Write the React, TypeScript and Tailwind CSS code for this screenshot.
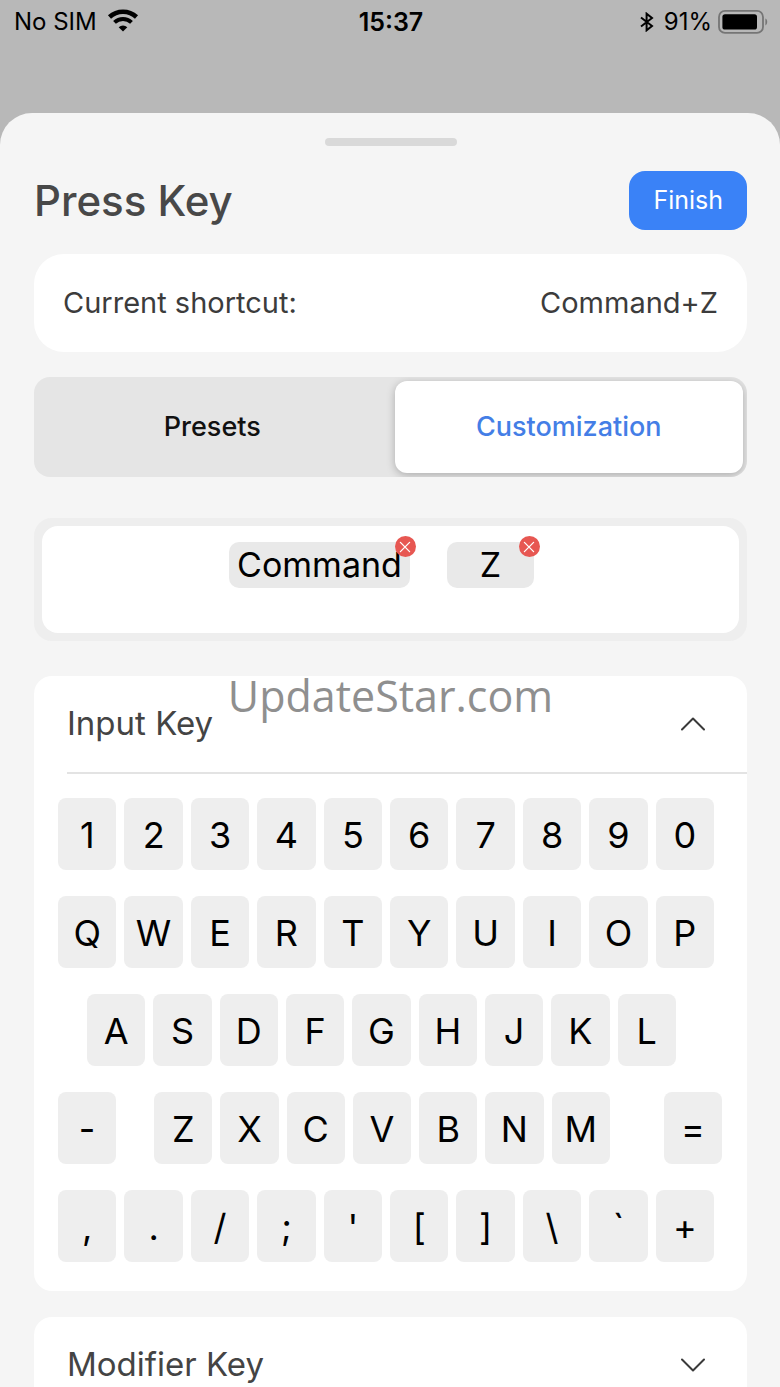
import React, { useState } from 'react';

const FONT = "font-['Inter','Liberation_Sans',sans-serif]";

// `gap` is extra space before a key, for the staggered rows
interface KeyDef {
  label: string;
  gap?: string;
}

const toKeys = (chars: string): KeyDef[] => chars.split('').map((label) => ({ label }));

const KEY_ROWS: { className: string; keys: KeyDef[] }[] = [
  { className: 'pr-2', keys: toKeys('1234567890') },
  { className: 'pr-2', keys: toKeys('QWERTYUIOP') },
  { className: 'pl-[29px] pr-[46px]', keys: toKeys('ASDFGHJKL') },
  {
    className: '',
    keys: [{ label: '-' }, { label: 'Z', gap: 'ml-[30px]' }, ...toKeys('XCVBNM'), { label: '=', gap: 'ml-[46px]' }],
  },
  { className: 'pr-2', keys: toKeys(",./;'[]\\`+") },
];

const WifiIcon: React.FC = () => (
  <svg className="w-8 h-[26px]" viewBox="0 0 32 26" fill="none" stroke="currentColor">
    <path d="M2.5 8A19.8 19.8 0 0 1 29.5 8" strokeWidth="4.5" />
    <path d="M7.5 13.4A12.5 12.5 0 0 1 24.5 13.4" strokeWidth="4" />
    <path d="M11.7 18.3A6.2 6.2 0 0 1 20.3 18.3L16 22.6Z" fill="currentColor" stroke="none" />
  </svg>
);

const BluetoothIcon: React.FC = () => (
  <svg className="w-3.5 h-5" viewBox="0 0 14 20" fill="none" stroke="currentColor" strokeWidth="2">
    <path d="M1 5.5L12 14L6.6 18.3V1.7L12 6L1 14.5" />
  </svg>
);

const BatteryIcon: React.FC = () => (
  <svg className="w-[50px] h-6" viewBox="0 0 50 24" fill="none">
    <rect x="1" y="0.9" width="44" height="22" rx="6" stroke="#757575" strokeWidth="1.8" />
    <rect x="4.4" y="4.2" width="34.6" height="15.4" rx="2.6" fill="black" />
    <path d="M47.4 8.6C49.8 9.2 49.8 14.8 47.4 15.4Z" fill="#757575" />
  </svg>
);

const Chevron: React.FC<{ open: boolean }> = ({ open }) => (
  <svg className="w-6 h-3.5" viewBox="0 0 24 14" fill="none" stroke="#3a3a3a" strokeWidth="2" strokeLinecap="round" strokeLinejoin="round">
    <path d={open ? 'M1 12.5L12 1.5L23 12.5' : 'M1 1.5L12 12.5L23 1.5'} />
  </svg>
);

const StatusBar: React.FC = () => (
  <header className="h-[113px] shrink-0 grid grid-cols-3 items-start pl-3.5 pr-3 pt-1.5 text-2xl leading-8 text-black">
    <div className="flex items-center gap-2.5">
      <span>No SIM</span>
      <WifiIcon />
    </div>
    <span className="text-center text-[25px] font-semibold">15:37</span>
    <div className="flex items-center justify-end gap-1.5">
      <BluetoothIcon />
      <span className="pl-1">91%</span>
      <BatteryIcon />
    </div>
  </header>
);

const Chip: React.FC<{ label: string; onRemove: () => void }> = ({ label, onRemove }) => (
  <div className="relative h-[46px] min-w-[87px] px-2 flex items-center justify-center rounded-[10px] bg-[#e9e9e9] text-[34px] leading-[48px] text-black">
    {label}
    <button
      type="button"
      onClick={onRemove}
      aria-label={`Remove ${label}`}
      className="absolute -top-1.5 -right-1.5 size-[21px] rounded-full bg-[#e75752] flex items-center justify-center"
    >
      <svg className="size-3" viewBox="0 0 12 12" stroke="white" strokeWidth="1.3" strokeLinecap="round">
        <path d="M1.4 1.4L10.6 10.6M10.6 1.4L1.4 10.6" />
      </svg>
    </button>
  </div>
);

interface SectionHeaderProps {
  title: string;
  open: boolean;
  onToggle: () => void;
}

const SectionHeader: React.FC<SectionHeaderProps> = ({ title, open, onToggle }) => (
  <button
    type="button"
    onClick={onToggle}
    aria-expanded={open}
    className="w-full h-24 pl-[33px] pr-[42px] flex items-center justify-between text-[33px] text-[#444]"
  >
    <span>{title}</span>
    <Chevron open={open} />
  </button>
);

export default function App() {
  const [tab, setTab] = useState('Customization');
  const [shortcut, setShortcut] = useState(['Command', 'Z']);
  const [inputOpen, setInputOpen] = useState(true);
  const [modifierOpen, setModifierOpen] = useState(false);

  const addKey = (label: string) => setShortcut([...shortcut, label]);
  const removeKey = (index: number) => setShortcut(shortcut.filter((_, i) => i !== index));

  return (
    <div className={`h-screen flex flex-col bg-[#b8b8b8] ${FONT}`}>
      <StatusBar />

      <main className="flex-1 overflow-y-auto [scrollbar-width:none] rounded-t-[32px] bg-[#f5f5f5] pt-[25px] pl-[34px] pr-[33px]">
        <div className="mx-auto w-[132px] h-2 rounded-full bg-[#d9d9d9]" />

        <div className="mt-[25px] flex items-center justify-between">
          <h1 className="text-[42px] leading-[58px] font-medium text-[#484848]">Press Key</h1>
          <button type="button" className="h-[59px] px-6 rounded-2xl bg-[#3a82f7] text-[25px] text-white">
            Finish
          </button>
        </div>

        <div className="mt-6 h-[98px] px-[29px] flex items-center justify-between rounded-[30px] bg-white text-[29px] text-[#3c3c3c]">
          <span>Current shortcut:</span>
          <span>{shortcut.join('+')}</span>
        </div>

        <div role="tablist" className="mt-[25px] h-[100px] p-1 flex gap-2 rounded-2xl bg-[#e5e5e5] text-[27px] font-medium overflow-hidden">
          {['Presets', 'Customization'].map((name) => (
            <button
              key={name}
              type="button"
              role="tab"
              aria-selected={tab === name}
              onClick={() => setTab(name)}
              className={
                tab === name
                  ? 'flex-1 basis-0 rounded-xl bg-white text-[#447ee6] shadow-[0_2px_8px_rgba(0,0,0,0.25)]'
                  : 'flex-1 basis-0 rounded-xl text-[#111]'
              }
            >
              {name}
            </button>
          ))}
        </div>

        <div className="mt-[41px] rounded-[18px] bg-[#eee] p-2">
          <div className="h-[107px] pt-4 pr-[18px] flex items-start justify-center gap-[37px] rounded-2xl bg-white">
            {shortcut.map((label, i) => (
              <Chip key={i} label={label} onRemove={() => removeKey(i)} />
            ))}
          </div>
        </div>

        <section className="relative mt-[35px] rounded-[18px] bg-white">
          <SectionHeader title="Input Key" open={inputOpen} onToggle={() => setInputOpen(!inputOpen)} />
          <p className="absolute inset-x-0 top-0 text-center font-['Open_Sans','Noto_Sans',sans-serif] text-[43px] leading-10 text-[#8f8f8f] pointer-events-none">
            UpdateStar.com
          </p>
          {inputOpen && (
            <>
              <div className="ml-[33px] h-0.5 bg-[#e3e3e3]" />
              <div className="pt-6 pb-[29px] pl-6 pr-[25px] flex flex-col gap-[26px]">
                {KEY_ROWS.map((row, i) => (
                  <div key={i} className={`flex gap-2 ${row.className}`}>
                    {row.keys.map(({ label, gap }) => (
                      <button
                        key={label}
                        type="button"
                        onClick={() => addKey(label)}
                        className={`flex-1 basis-0 min-w-0 h-[72px] pt-0.5 rounded-lg bg-[#eee] text-4xl text-black ${gap ?? ''}`}
                      >
                        {label}
                      </button>
                    ))}
                  </div>
                ))}
              </div>
            </>
          )}
        </section>

        <section className="mt-[26px] rounded-[18px] bg-white">
          <SectionHeader title="Modifier Key" open={modifierOpen} onToggle={() => setModifierOpen(!modifierOpen)} />
        </section>
      </main>
    </div>
  );
}
